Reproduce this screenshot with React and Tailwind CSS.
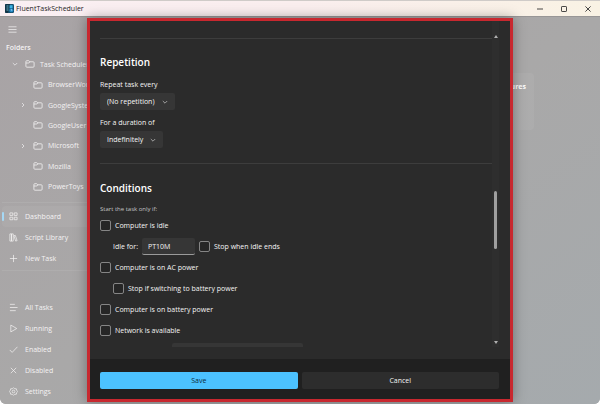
import React, { useState } from 'react';

const folders = [
  { name: 'Task Scheduler', arrow: 'down' },
  { name: 'BrowserWorks', child: true },
  { name: 'GoogleSystem', child: true, arrow: 'right' },
  { name: 'GoogleUser', child: true },
  { name: 'Microsoft', child: true, arrow: 'right' },
  { name: 'Mozilla', child: true },
  { name: 'PowerToys', child: true },
];

const icons = {
  dashboard: <path d="M1 1h3.2v2.8H1zM5.8 1H9v2.8H5.8zM1 5.8h3.2v2.8H1zM5.8 5.8H9v2.8H5.8z" />,
  library: <path d="M1 1h1.8v8H1zM2.8 1h1.9v8H2.8zM5.4 3l1.6-.4L9 8.5l-1.6.5z" />,
  plus: <path d="M5 1v8M1 5h8" />,
  list: <path d="M1 1.5h5.5M1 5h8.5M1 8.5h6.5" />,
  play: <path d="M2 1.2v7.6L8.6 5z" />,
  check: <path d="M.8 5.5l2.7 2.7L9.4 2" />,
  cross: <path d="M2 2l6 6M8 2L2 8" />,
  gear: (
    <>
      <path d="M5 .7l1.3 1.3 1.8-.1.4 1.7L9.6 5 8.5 6.4l-.4 1.7-1.8-.1L5 9.3 3.7 8l-1.8.1-.4-1.7L.4 5l1.1-1.4.4-1.7 1.8.1z" />
      <circle cx="5" cy="5" r="1.5" />
    </>
  ),
  menu: <path d="M.5 2h9M.5 5h9M.5 8h9" />,
};

function Icon({ name }) {
  return (
    <svg viewBox="0 0 10 10" className="size-[9px] shrink-0" fill="none" stroke="currentColor" strokeWidth="0.8" aria-hidden="true">
      {icons[name]}
    </svg>
  );
}

function Chevron({ right = false, className = '' }) {
  return (
    <svg viewBox="0 0 6 6" className={`size-[6px] shrink-0 ${className}`} fill="none" stroke="currentColor" strokeWidth="0.7" aria-hidden="true">
      <path d={right ? 'M2 1l2 2-2 2' : 'M.8 2L3 4.2 5.2 2'} />
    </svg>
  );
}

function FolderIcon() {
  return (
    <svg viewBox="0 0 10 8" className="h-[8px] w-[10px] shrink-0" fill="none" stroke="currentColor" strokeWidth="0.8" aria-hidden="true">
      <path d="M.9 1.6q0-.9.9-.9h1.9l1.2 1.1h3.3q.9 0 .9.9v3.6q0 .9-.9.9H1.8q-.9 0-.9-.9zM.9 3h3l1-1.2" />
    </svg>
  );
}

function NavLink({ icon, label, active = false }) {
  return (
    <a href="#" className={`flex h-[21px] items-center ${active ? 'rounded-sm bg-white/5' : ''}`}>
      <span className={`h-[9px] w-[2px] rounded-full ${active ? 'bg-[#a5d8f5]' : ''}`} />
      <span className="flex w-[21px] pl-[5px]">
        <Icon name={icon} />
      </span>
      {label}
    </a>
  );
}

function TitleBar() {
  return (
    <header className="flex h-[16px] shrink-0 items-center border-t border-[#cfcbc8] bg-linear-to-r from-[#faeff3] via-[#faeeee] to-[#f9f2e4] pl-[5px] text-[#222]">
      <svg viewBox="0 0 9 9" className="mr-[2px] size-[9px]" aria-hidden="true">
        <rect width="9" height="9" rx="1.2" fill="#17506f" />
        <path d="M0 1.2Q0 0 1.2 0H5L3 9H1.2Q0 9 0 7.8z" fill="#123547" />
        <path d="M1.5 2h2M1.5 4h2M1.5 6h2" stroke="#7fd0e8" strokeWidth="0.8" />
        <path d="M4.6 1.2h3v3h-3z" fill="#3cb3e4" />
        <circle cx="6.3" cy="6.2" r="2" fill="#2286c4" />
        <path d="M6.3 5v1.3h1" stroke="#d8f3ff" strokeWidth="0.6" fill="none" />
      </svg>
      <h1 className="grow">FluentTaskScheduler</h1>
      <button aria-label="Minimize" className="flex h-full w-[24px] items-center justify-center">
        <svg viewBox="0 0 6 6" className="size-[6px]" stroke="#333" strokeWidth="0.9"><path d="M0 3h6" /></svg>
      </button>
      <button aria-label="Maximize" className="flex h-full w-[24px] items-center justify-center">
        <svg viewBox="0 0 6 6" className="size-[6px]" fill="none" stroke="#333" strokeWidth="0.9"><rect x=".5" y=".5" width="5" height="5" rx=".6" /></svg>
      </button>
      <button aria-label="Close" className="flex h-full w-[24px] items-center justify-center">
        <svg viewBox="0 0 6 6" className="size-[6px]" stroke="#333" strokeWidth="0.9"><path d="M.4.4l5.2 5.2M5.6.4L.4 5.6" /></svg>
      </button>
    </header>
  );
}

function Sidebar() {
  return (
    <aside className="flex w-[104px] shrink-0 flex-col overflow-hidden pl-[2px] whitespace-nowrap text-[#f4f2f3]">
      <button aria-label="Menu" className="flex h-[24px] w-[22px] items-center pl-[6px]">
        <Icon name="menu" />
      </button>
      <h2 className="pl-[4px] leading-[13px] font-semibold">Folders</h2>
      <ul className="grid h-[143px] auto-rows-fr">
        {folders.map((f) => (
          <li key={f.name} className={`flex items-center gap-[6px] ${f.child ? 'pl-[18px]' : 'pl-[10px]'}`}>
            <span className="w-[7px]">
              {f.arrow && <Chevron right={f.arrow === 'right'} />}
            </span>
            <span className="flex items-center gap-[5px]">
              <FolderIcon />
              {f.name}
            </span>
          </li>
        ))}
      </ul>
      <nav className="mt-[5px] border-y border-white/8 pt-[3px] pb-px">
        <NavLink icon="dashboard" label="Dashboard" active />
        <NavLink icon="library" label="Script Library" />
        <NavLink icon="plus" label="New Task" />
      </nav>
      <nav className="mt-auto pb-[2px]">
        <NavLink icon="list" label="All Tasks" />
        <NavLink icon="play" label="Running" />
        <NavLink icon="check" label="Enabled" />
        <NavLink icon="cross" label="Disabled" />
        <NavLink icon="gear" label="Settings" />
      </nav>
    </aside>
  );
}

function Check({ label }) {
  const [on, setOn] = useState(false);
  return (
    <label className="flex h-[21px] items-center gap-[4px]">
      <input
        type="checkbox"
        checked={on}
        onChange={(e) => setOn(e.target.checked)}
        className="size-[11px] appearance-none rounded-xs border border-[#858585] bg-[#262626] checked:bg-[#4cc2ff]"
      />
      {label}
    </label>
  );
}

function Picker({ id, label, value, width }) {
  return (
    <div>
      <label htmlFor={id} className="block h-[16px] leading-[15px]">{label}</label>
      <div className={`relative ${width}`}>
        <select id={id} className="block h-[17px] w-full appearance-none rounded-xs bg-[#363636] pl-[7px] leading-[15px]">
          <option>{value}</option>
        </select>
        <Chevron className="pointer-events-none absolute top-[6px] right-[7px] text-[#ccc]" />
      </div>
    </div>
  );
}

function TaskDialog() {
  return (
    <section role="dialog" aria-label="Edit task" className="flex min-w-0 grow flex-col border-[3px] border-[#c8282f] bg-[#2b2b2b] text-[#f5f5f5] shadow-[0_0_12px_rgba(0,0,0,0.35)]">
      <div className="flex min-h-0 grow pr-[11px] pb-[12px] pl-[10px]">
        <div className="min-w-0 grow overflow-hidden pt-[17px]">
          <hr className="border-[#3d3d3d]" />
          <h2 className="mt-[16px] mb-[7px] text-[10px] leading-[15px] font-semibold text-white">Repetition</h2>
          <div className="space-y-[5px]">
            <Picker id="repeat" label="Repeat task every" value="(No repetition)" width="w-[75px]" />
            <Picker id="duration" label="For a duration of" value="Indefinitely" width="w-[63px]" />
          </div>
          <hr className="mt-[15px] border-[#3d3d3d]" />
          <h2 className="mt-[17px] mb-[8px] text-[10px] leading-[15px] font-semibold text-white">Conditions</h2>
          <p className="text-[6px] leading-[11px] text-[#c4c4c4]">Start the task only if:</p>
          <Check label="Computer is idle" />
          <div className="flex h-[21px] items-center pl-[13px]">
            <label htmlFor="idle" className="w-[29px]">Idle for:</label>
            <input id="idle" defaultValue="PT10M" className="mr-[4px] h-[17px] w-[53px] rounded-xs border-b border-[#9a9a9a] bg-[#363636] pl-[6px]" />
            <Check label="Stop when idle ends" />
          </div>
          <Check label="Computer is on AC power" />
          <div className="pl-[13px]">
            <Check label="Stop if switching to battery power" />
          </div>
          <Check label="Computer is on battery power" />
          <Check label="Network is available" />
          <input aria-label="Network name" className="mt-[2px] ml-[72px] block h-[17px] w-[131px] rounded-xs bg-[#363636]" />
        </div>
        <div className="flex w-[7px] shrink-0 flex-col items-center bg-[#2e2e2e] pt-[14px]">
          <svg viewBox="0 0 4 3" className="h-[3px] w-[4px]" fill="#b0b0b0" aria-hidden="true"><path d="M2 0l2 3H0z" /></svg>
          <div className="mt-[153px] h-[58px] w-[3px] rounded-full bg-[#9f9f9f]" />
          <svg viewBox="0 0 4 3" className="mt-auto mb-[3px] h-[3px] w-[4px]" fill="#b0b0b0" aria-hidden="true"><path d="M2 3l2-3H0z" /></svg>
        </div>
      </div>
      <footer className="grid grid-cols-2 gap-[4px] bg-[#202020] pt-[13px] pr-[11px] pb-[10px] pl-[10px]">
        <button className="h-[17px] rounded-xs bg-[#4cc2ff] text-[#0c2a3a]">Save</button>
        <button className="h-[17px] rounded-xs bg-[#2d2d2d]">Cancel</button>
      </footer>
    </section>
  );
}

export default function App() {
  return (
    <div className="relative flex h-screen flex-col overflow-hidden rounded-b-md bg-[#a6a5a5] font-['Open_Sans','Noto_Sans',sans-serif] text-[7px] leading-[11px]">
      <TitleBar />
      <div className="flex min-h-0 grow border-t border-[#989696] bg-linear-to-br from-[#a8a3a5] via-[#a9a8a8] to-[#a5aaad]">
        <Sidebar />
        <main className="grow pt-[56px] pr-[66px]">
          <article className="ml-auto h-[57px] w-[90px] rounded-sm bg-white/5 pt-[8px] pr-[8px] text-right font-bold text-white">
            Failures
          </article>
        </main>
      </div>
      <div className="absolute inset-0 flex pt-[18px] pr-[87px] pb-[2px] pl-[87px]">
        <TaskDialog />
      </div>
    </div>
  );
}
